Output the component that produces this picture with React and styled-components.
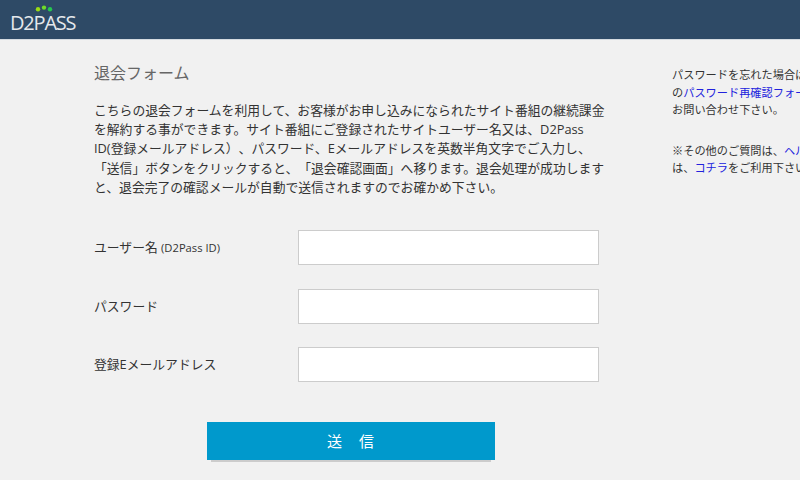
import React from "react";
import styled, { createGlobalStyle } from "styled-components";

const GlobalStyle = createGlobalStyle`
  html, body {
    margin: 0;
    padding: 0;
    height: 100%;
    overflow: hidden;
    background: #f1f1f1;
    font-family: "Open Sans", "Noto Sans CJK JP", sans-serif;
    color: #333;
    text-spacing-trim: space-all;
  }
`;

const Header = styled.header`
  height: 40px;
  background: #2e4a66;
  border-bottom: 1px solid #d5dbe0;
  padding-left: 12px;
  box-sizing: border-box;
`;

const Logo = styled.div`
  display: flex;
  flex-direction: column;
  width: 66px;
  padding-top: 5px;
`;

const Dots = styled.svg`
  display: block;
  margin-left: 23px;
`;

const LogoText = styled.span`
  font-size: 20px;
  line-height: 20px;
  color: #e4e8ec;
  letter-spacing: -1.2px;
  margin: 1px 0 0 -2px;
`;

const Page = styled.div`
  display: flex;
  padding: 0 0 20px 94px;
  width: 800px;
  box-sizing: border-box;
  overflow: hidden;
`;

const Main = styled.main`
  width: 514px;
  flex: none;
`;

const Title = styled.h1`
  margin: 23px 0 0;
  font-size: 16px;
  line-height: 20px;
  font-weight: 400;
  color: #666;
`;

const Lead = styled.p`
  margin: 18px 0 0;
  font-size: 12.8px;
  line-height: 19.2px;
  color: #333;
  white-space: nowrap;
`;

const Form = styled.form`
  margin-top: 33px;
  display: flex;
  flex-direction: column;
  gap: 23.5px;
`;

const Row = styled.div`
  display: flex;
  align-items: center;
`;

const Label = styled.label`
  width: 204px;
  flex: none;
  padding-bottom: 2px;
  font-size: 12.8px;
  color: #333;
  small {
    font-size: 11.2px;
  }
`;

const Input = styled.input`
  width: 301px;
  height: 35px;
  box-sizing: border-box;
  background: #fff;
  border: 1px solid #ccc;
  padding: 0 8px;
  outline: none;
`;

const Submit = styled.button`
  display: block;
  width: 288px;
  height: 38px;
  margin: 16px 0 0 113px;
  padding: 0;
  border: none;
  background: #0099cc;
  color: #fff;
  font-family: inherit;
  font-size: 15px;
  letter-spacing: 1px;
  box-shadow: 0 6px 0 -4px #cccccc;
`;

const Side = styled.aside`
  margin: 26px 0 0 64px;
  flex: none;
  width: 300px;
  font-size: 11.2px;
  line-height: 17.5px;
  color: #333;
  white-space: nowrap;
`;

const Note = styled.p`
  margin: 0 0 23px;
`;

const SideLink = styled.a`
  color: #2222dd;
  text-decoration: none;
`;

export default function App() {
  return (
    <>
      <GlobalStyle />
      <Header>
        <Logo>
          <Dots width="18" height="7" viewBox="0 0 18 7">
            <circle cx="3" cy="4.2" r="2.2" fill="#9bdc14" />
            <circle cx="9" cy="2.6" r="2.2" fill="#6fdc28" />
            <circle cx="15" cy="4.2" r="2.2" fill="#25c850" />
          </Dots>
          <LogoText>D2PASS</LogoText>
        </Logo>
      </Header>
      <Page>
        <Main>
          <Title>退会フォーム</Title>
          <Lead>
            こちらの退会フォームを利用して、お客様がお申し込みになられたサイト番組の継続課金
            <br />
            を解約する事ができます。サイト番組にご登録されたサイトユーザー名又は、D2Pass
            <br />
            ID(登録メールアドレス）、パスワード、Eメールアドレスを英数半角文字でご入力し、
            <br />
            「送信」ボタンをクリックすると、「退会確認画面」へ移ります。退会処理が成功します
            <br />
            と、退会完了の確認メールが自動で送信されますのでお確かめ下さい。
          </Lead>
          <Form>
            <Row>
              <Label>
                ユーザー名 <small>(D2Pass ID)</small>
              </Label>
              <Input type="text" />
            </Row>
            <Row>
              <Label>パスワード</Label>
              <Input type="password" />
            </Row>
            <Row>
              <Label>登録Eメールアドレス</Label>
              <Input type="text" />
            </Row>
            <Submit type="button">送　信</Submit>
          </Form>
        </Main>
        <Side>
          <Note>
            パスワードを忘れた場合は、
            <br />
            の<SideLink href="#">パスワード再確認フォーム</SideLink>
            <br />
            お問い合わせ下さい。
          </Note>
          <Note>
            ※その他のご質問は、<SideLink href="#">ヘルプ</SideLink>
            <br />
            は、<SideLink href="#">コチラ</SideLink>をご利用下さい。
          </Note>
        </Side>
      </Page>
    </>
  );
}
